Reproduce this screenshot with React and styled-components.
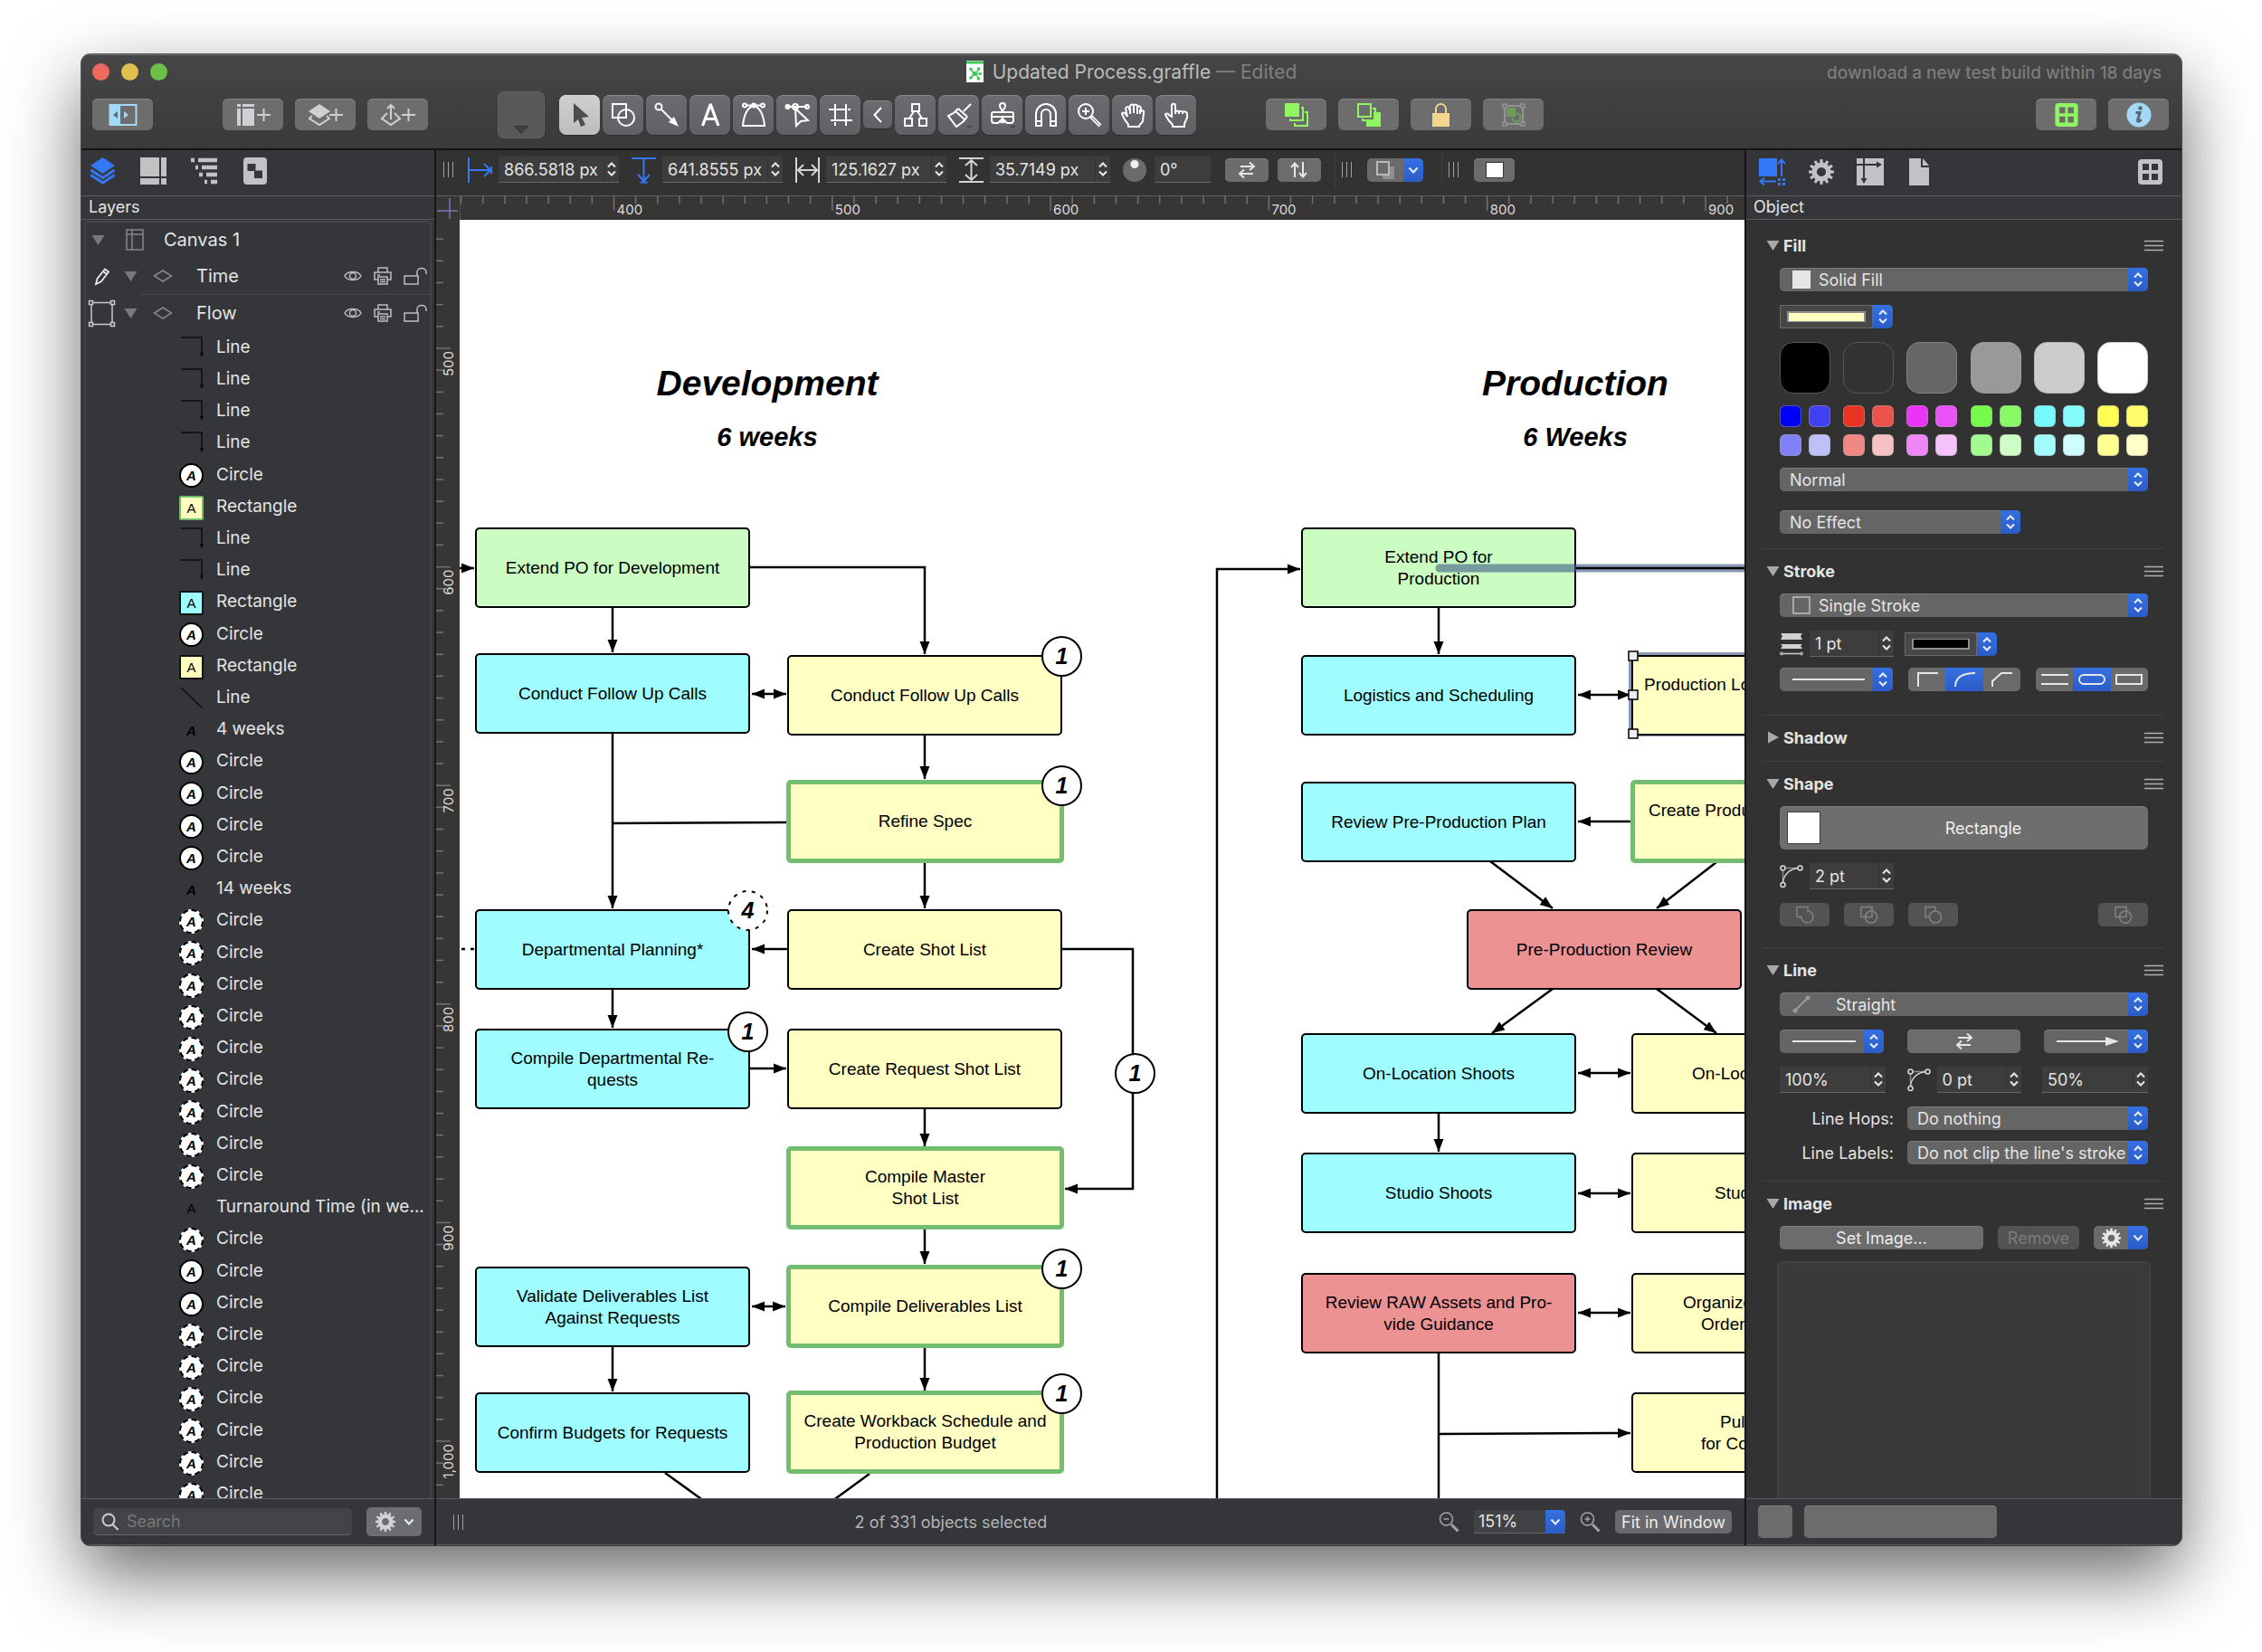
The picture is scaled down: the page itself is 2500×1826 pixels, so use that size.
import React from "react";
import styled, { createGlobalStyle, css } from "styled-components";

const UI = `Inter, "Liberation Sans", sans-serif`;
const HELV = `"Liberation Sans", Arial, sans-serif`;

const GlobalStyle = createGlobalStyle`
  * { box-sizing: border-box; }
  body { margin: 0; background: #fff; }
  button, input, select { font: inherit; color: inherit; margin: 0; }
  button { padding: 0; border: 0; background: none; cursor: default; }
  svg { display: block; flex: none; }
`;

/* ---------- window frame ---------- */

const Desktop = styled.div`
  height: 100vh;
  padding: 60px 89px 118px 90px;
  overflow: hidden;
  font-family: ${UI};
  color: #e4e4e4;
`;

const Window = styled.div`
  height: 100%;
  display: flex;
  flex-direction: column;
  border-radius: 10px;
  background: #323232;
  box-shadow: 0 0 0 1px rgba(0, 0, 0, 0.6), 0 32px 80px rgba(0, 0, 0, 0.6);
  overflow: hidden;
`;

const Header = styled.header`
  height: 106px;
  flex: none;
  border-bottom: 2px solid #141414;
  background: linear-gradient(#464646, #3a3a3a);
  box-shadow: inset 0 1px 0 #6c6c6c;
`;

const TitleBar = styled.div`
  height: 38px;
  display: grid;
  grid-template-columns: 1fr auto 1fr;
  align-items: center;
  padding: 0 12px;
`;

const Lights = styled.div`
  display: flex;
  gap: 13px;
`;

const Light = styled.button`
  width: 19px;
  height: 19px;
  border-radius: 50%;
  background: ${(p) => p.$color};
`;

const DocTitle = styled.div`
  display: flex;
  align-items: center;
  gap: 10px;
  font-size: 21px;
  color: #bcbcbc;
  span { color: #808080; }
`;

const Notice = styled.div`
  justify-self: end;
  padding: 3px 10px 0 0;
  font-size: 19px;
  font-weight: 500;
  color: #7c7c7c;
`;

const Toolbar = styled.div`
  height: 57px;
  display: flex;
  align-items: center;
  padding: 0 14px 0 12px;
`;

const ToolGroup = styled.div`
  display: flex;
  align-items: center;
  gap: ${(p) => p.$gap || 13}px;
  margin-left: ${(p) => (p.$push ? "auto" : `${p.$before || 0}px`)};
`;

const ToolbarButton = styled.button`
  width: 67px;
  height: 35px;
  display: grid;
  place-items: center;
  border-radius: 6px;
  background: #6d6d6d;
  box-shadow: inset 0 1px 0 #828282;
`;

const ToolButton = styled.button`
  width: ${(p) => (p.$small ? 32 : 45)}px;
  height: ${(p) => (p.$small ? 31 : 44)}px;
  display: grid;
  place-items: center;
  border-radius: ${(p) => (p.$small ? 6 : 8)}px;
  background: ${(p) => (p.$active ? "linear-gradient(#cfcfd1, #bdbdbf)" : "linear-gradient(#6b6c6f, #606164)")};
  box-shadow: inset 0 1px 0 ${(p) => (p.$active ? "#dcdcdc" : "#85868a")}, 0 1px 1px rgba(0, 0, 0, 0.25);
`;

const StyleWell = styled.button`
  width: 52px;
  height: 52px;
  display: grid;
  place-items: end center;
  padding-bottom: 4px;
  border: 1px solid #626262;
  border-radius: 7px;
  background: #585858;
`;

const Columns = styled.div`
  flex: 1;
  min-height: 0;
  display: grid;
  grid-template-columns: 392px minmax(0, 1fr) 483px;
`;

const Column = styled.section`
  min-width: 0;
  min-height: 0;
  display: flex;
  flex-direction: column;
`;

const LeftColumn = styled(Column)`
  background: #35363a;
  border-right: 2px solid #161616;
`;

const RightColumn = styled(Column)`
  background: #35363a;
  border-left: 2px solid #161616;
`;

const TabStrip = styled.nav`
  height: 51px;
  flex: none;
  display: flex;
  align-items: center;
  gap: ${(p) => p.$gap}px;
  padding: 0 20px ${(p) => p.$lift}px ${(p) => p.$left}px;
  border-bottom: 1px solid #5a5b5e;
`;

const Tab = styled.button`
  display: grid;
  place-items: center;
  margin-left: ${(p) => (p.$end ? "auto" : 0)};
`;

const PaneTitle = styled.h2`
  height: 26px;
  flex: none;
  margin: 0;
  padding-left: 8px;
  border-bottom: 1px solid #5a5b5e;
  font-size: 18px;
  font-weight: 400;
  line-height: 24px;
`;

const FooterBar = styled.footer`
  height: 52px;
  flex: none;
  display: flex;
  align-items: center;
  gap: ${(p) => p.$gap || 16}px;
  padding: ${(p) => p.$pad};
  border-top: 1px solid #5a5b5e;
  border-bottom: 1px solid #5a5b5e;
  background: #35363a;
`;

/* ---------- layer list ---------- */

const Layers = styled.div`
  flex: 1;
  min-height: 0;
  margin: 1px 3px 0;
  border: 2px solid #434446;
  border-bottom: 0;
  border-radius: 5px 5px 0 0;
  overflow: hidden;
  font-size: 19px;
`;

const CanvasRow = styled.div`
  height: 38px;
  display: flex;
  align-items: center;
  padding-left: 6px;
  font-size: 20px;
`;

const LayerRow = styled.div`
  height: ${(p) => (p.$last ? 40 : 42)}px;
  display: grid;
  grid-template-columns: 40px 32px 36px 1fr auto;
  align-items: center;
  padding: 0 3px 0 2px;
  font-size: 20px;
  background: ${(p) => (p.$last ? "none" : "linear-gradient(#47484b, #47484b) 59px 100% / 100% 1px no-repeat")};
`;

const LayerName = styled.span`
  padding-left: 12px;
`;

const RowIcons = styled.span`
  display: flex;
  align-items: center;
  gap: 13px;
`;

const Items = styled.ul`
  display: grid;
  grid-auto-rows: 35px 35px 35px 35px 36px;
  margin: 0;
  padding: 0 2px 0 103px;
  list-style: none;
`;

const Item = styled.li`
  display: grid;
  grid-template-columns: 27px 1fr;
  gap: 14px;
  align-items: center;
  white-space: nowrap;
`;

const Thumb = styled.span`
  width: 27px;
  height: 27px;
  margin-top: 3px;
  display: grid;
  place-items: center;
  font: 15px/1 ${HELV};
  color: #000;
  border-radius: 2px;
  ${(p) => p.$fill && css`
    background: ${p.$fill};
    border: 2px solid ${p.$edge || "#111"};
  `}
  ${(p) => p.$round && css`
    border-radius: 50%;
    background: #fff;
    border: 2px ${p.$dashed ? "dashed" : "solid"} #000;
  `}
  ${(p) => p.$bold && css`
    font-weight: 700;
    font-style: italic;
  `}
`;

const Search = styled.label`
  flex: 1;
  min-width: 0;
  height: 30px;
  display: flex;
  align-items: center;
  gap: 9px;
  padding-left: 9px;
  border-radius: 5px;
  border-bottom: 1px solid #626366;
  background: #434448;
  font-size: 18px;
  input {
    min-width: 0;
    flex: 1;
    padding: 0;
    border: 0;
    outline: 0;
    background: none;
  }
  input::placeholder { color: #77787b; opacity: 1; }
`;

/* ---------- shared controls ---------- */

const MenuButton = styled.button`
  width: 61px;
  height: 32px;
  flex: none;
  display: flex;
  align-items: center;
  justify-content: center;
  gap: 8px;
  border-radius: 5px;
  background: #6c6d70;
`;

const PushButton = styled.button`
  width: ${(p) => (p.$w ? `${p.$w}px` : "auto")};
  height: ${(p) => p.$h || 26}px;
  flex: ${(p) => (p.$grow ? 1 : "none")};
  display: grid;
  place-items: center;
  border-radius: 5px;
  background: ${(p) => (p.disabled ? "#535353" : "#6c6c6c")};
  box-shadow: ${(p) => (p.disabled ? "none" : "inset 0 1px 0 #7e7e7e")};
  color: ${(p) => (p.disabled ? "#7b7b7b" : "#ececec")};
`;

const FooterButton = styled(PushButton)`
  background: #68696c;
  box-shadow: none;
  font-size: 18px;
`;

const SplitButton = styled.button`
  height: 26px;
  display: flex;
  border-radius: 5px;
  overflow: hidden;
  background: #6a6a6a;
  > span {
    width: ${(p) => p.$w}px;
    display: grid;
    place-items: center;
  }
`;

const Cap = styled.i`
  grid-area: 1 / 1;
  justify-self: end;
  width: 22px;
  height: 26px;
  flex: none;
  display: grid;
  place-items: center;
  pointer-events: none;
  border-radius: 0 5px 5px 0;
  background: linear-gradient(#3570e2, #2a5cc8);
`;

const Popup = styled.div`
  width: ${(p) => (p.$w ? `${p.$w}px` : "auto")};
  flex: ${(p) => (p.$w ? "none" : 1)};
  height: 26px;
  display: grid;
  grid-template-columns: minmax(0, 1fr);
  align-items: center;
  select {
    grid-area: 1 / 1;
    width: 100%;
    height: 26px;
    padding: 0 22px 0 ${(p) => p.$inset || 11}px;
    appearance: none;
    border: 0;
    border-radius: 5px;
    outline: 0;
    background: #656565;
    box-shadow: inset 0 1px 0 #7a7a7a;
    color: #e6e6e6;
  }
  > svg {
    grid-area: 1 / 1;
    margin-left: 14px;
    pointer-events: none;
  }
`;

const ZoomPopup = styled.div`
  width: 101px;
  height: 26px;
  display: grid;
  font-size: 18px;
  select {
    grid-area: 1 / 1;
    padding: 0 0 0 5px;
    appearance: none;
    border: 0;
    border-bottom: 1px solid #6a6a6c;
    outline: 0;
    background: #414246;
  }
`;

const NumberBox = styled.span`
  width: ${(p) => p.$w}px;
  height: 29px;
  flex: none;
  display: flex;
  border-bottom: 1px solid #666;
  background: #3d3d3d;
  input {
    flex: 1;
    min-width: 0;
    padding: 0 0 0 6px;
    border: 0;
    outline: 0;
    background: none;
  }
`;

const Stepper = styled.button`
  width: 17px;
  flex: none;
  display: grid;
  place-items: center;
  border-left: 1px solid #333;
`;

const GripBars = styled.i`
  width: 11px;
  height: 17px;
  flex: none;
  border: solid #a0a0a0;
  border-width: 0 1px;
  background: linear-gradient(#a0a0a0, #a0a0a0) 50% 0 / 1px 100% no-repeat;
`;

const Divider = styled.i`
  width: 1px;
  height: 40px;
  flex: none;
  background: #404040;
`;

/* ---------- centre column ---------- */

const GeometryBar = styled.div`
  height: 51px;
  flex: none;
  display: flex;
  align-items: center;
  padding: 0 0 7px 8px;
  border-bottom: 1px solid #5f5f5f;
  background: #323232;
  font-size: 18px;
  overflow: hidden;
`;

const Measure = styled.label`
  display: flex;
  align-items: center;
  gap: 7px;
  margin-right: 14px;
`;

const Spaced = styled.span`
  display: flex;
  flex: none;
  margin-left: ${(p) => p.$before}px;
`;

const Dial = styled.button`
  width: 26px;
  height: 26px;
  flex: none;
  border-radius: 50%;
  background: radial-gradient(circle at 50% 25%, #eee 0 4px, #6b6b6b 5px);
`;

const FillWell = styled.i`
  width: 20px;
  height: 18px;
  background: #fff;
  border: 1px solid #333;
`;

const Workspace = styled.div`
  flex: 1;
  min-height: 0;
  display: grid;
  grid-template: 26px minmax(0, 1fr) / 26px minmax(0, 1fr);
  background: #383535;
`;

const RulerClip = styled.div`
  min-width: 0;
  min-height: 0;
  overflow: hidden;
  border: solid #57534f;
  border-width: ${(p) => (p.$vertical ? "0" : "0 0 0 1px")};
  text { font: 15px ${UI}; fill: #dcdcdc; }
`;

const Canvas = styled.main`
  position: relative;
  overflow: hidden;
  background: #fff;
`;

const EdgeLayer = styled.svg`
  position: absolute;
  inset: 0;
  overflow: visible;
  pointer-events: none;
`;

const Node = styled.div`
  position: absolute;
  left: ${(p) => p.$x}px;
  top: ${(p) => p.$y}px;
  width: ${(p) => (p.$key ? 307 : 304)}px;
  height: ${(p) => (p.$key ? 92 : 89)}px;
  margin: ${(p) => (p.$key ? "-2px -1px" : "0")};
  display: flex;
  flex-direction: column;
  justify-content: center;
  border: ${(p) => (p.$key ? "5px solid #73bd70" : "2px solid #000")};
  border-radius: 5px;
  background: ${(p) => p.$fill};
  color: #000;
  font: 19px/24px ${HELV};
  text-align: center;
  white-space: nowrap;
  ${(p) => p.$selected && css`
    border-radius: 0;
    box-shadow: -3px -3px 0 #8b9bb5, 0 1px 0 #8b9bb5;
  `}
`;

const Line = styled.span`
  display: block;
  min-height: 24px;
  ${(p) => p.$lead && css`
    text-align: left;
    padding-left: ${p.$lead}px;
  `}
`;

const Badge = styled.div`
  position: absolute;
  left: ${(p) => p.$x - 22}px;
  top: ${(p) => p.$y - 22}px;
  width: 45px;
  height: 45px;
  display: grid;
  place-items: center;
  color: #000;
  font: italic 700 25px/1 ${HELV};
  svg, span { grid-area: 1 / 1; }
`;

const PhaseTitle = styled.h1`
  position: absolute;
  left: ${(p) => p.$x - 200}px;
  top: ${(p) => p.$y}px;
  width: 400px;
  margin: 0;
  color: #000;
  text-align: center;
  font: italic 700 39px/44px ${HELV};
  small {
    display: block;
    padding-top: 20px;
    font-size: 29px;
    line-height: 34px;
  }
`;

const Status = styled.span`
  flex: 1;
  text-align: center;
  font-size: 18px;
  color: #b3b3b5;
`;

/* ---------- inspector ---------- */

const Inspector = styled.div`
  flex: 1;
  min-height: 0;
  display: flex;
  flex-direction: column;
  padding: 4px 19px 0;
  background: #323232;
  font-size: 18px;
  overflow: hidden;
`;

const Section = styled.section`
  flex: none;
  padding: 12px 0 ${(p) => p.$foot}px;
  border-bottom: 1px solid #414141;
  ${(p) => p.$last && css`
    flex: 1;
    min-height: 0;
    display: flex;
    flex-direction: column;
    border: 0;
  `}
`;

const SectionHead = styled.div`
  height: 24px;
  flex: none;
  display: flex;
  align-items: center;
  justify-content: space-between;
  padding: 0 1px 0 3px;
  h3 { margin: 0; font-size: 18px; font-weight: 700; }
  h3 button { display: flex; align-items: center; gap: 4px; }
`;

const Body = styled.div`
  display: flex;
  flex-direction: column;
  gap: ${(p) => p.$gap || 15}px;
  padding: ${(p) => (p.$plain ? `0 0 ${p.$under || 0}px` : "13px 18px 0")};
  ${(p) => p.$fill && css`flex: 1; min-height: 0;`}
`;

const Row = styled.div`
  display: flex;
  align-items: center;
  justify-content: ${(p) => (p.$spread ? "space-between" : "flex-start")};
  gap: ${(p) => p.$gap || 0}px;
`;

const LabeledRow = styled.div`
  display: grid;
  grid-template-columns: 126px 1fr;
  align-items: center;
  gap: 15px;
  label { text-align: right; }
`;

const Well = styled.button`
  width: ${(p) => p.$w}px;
  height: 26px;
  display: flex;
  i:first-child {
    flex: 1;
    height: 26px;
    border: 1px solid #6a6a6a;
    background: linear-gradient(${(p) => p.$color}, ${(p) => p.$color}) center / calc(100% - 18px) 9px no-repeat,
      linear-gradient(#8f8f8f, #8f8f8f) center / calc(100% - 14px) 12px no-repeat, #474747;
  }
`;

const Palette = styled.div`
  display: grid;
  grid-template-columns: repeat(6, 56px);
  justify-content: space-between;
  row-gap: 13px;
`;

const Swatch = styled.button`
  height: ${(p) => (p.$big ? 57 : 24)}px;
  border: 1px solid ${(p) => p.$edge || "rgba(160, 160, 160, 0.5)"};
  border-radius: ${(p) => (p.$big ? 15 : 6)}px;
  background: ${(p) => p.$color};
`;

const SwatchGroup = styled.div`
  display: grid;
  grid-template-columns: 24px 24px;
  gap: 8px;
`;

const Segments = styled.div`
  width: 124px;
  height: 26px;
  display: grid;
  grid-template-columns: repeat(3, 1fr);
  border-radius: 5px;
  overflow: hidden;
  background: #6a6a6a;
`;

const Segment = styled.button`
  display: grid;
  place-items: center;
  background: ${(p) => (p.$on ? "linear-gradient(#3570e2, #2a5cc8)" : "none")};
`;

const ShapeButton = styled.button`
  height: 48px;
  display: grid;
  grid-template-columns: 37px 1fr;
  align-items: center;
  padding: 0 2px 0 8px;
  border-radius: 6px;
  background: #6e6e6e;
  box-shadow: inset 0 1px 0 #808080;
  color: #f0f0f0;
  i { height: 36px; background: #fff; border: 1px solid #3a3a3a; }
`;

const Spring = styled.span`
  flex: 1;
`;

const ImageDrop = styled.div`
  flex: 1;
  margin: 0 -3px;
  border: 2px solid #414141;
  border-bottom: 0;
  border-radius: 6px 6px 0 0;
  background: #3a3a3a;
`;

/* ---------- icons ---------- */

const Icon = ({ w = 28, h = w, c = "#e6e6e6", s = 2, children, box }) => (
  <svg width={w} height={h} viewBox={box || `0 0 ${w} ${h}`} fill="none" stroke={c} strokeWidth={s} aria-hidden="true">
    {children}
  </svg>
);

const UpDown = ({ c = "#e8e8e8" }) => (
  <Icon w={12} h={18} c={c}>
    <path d="M2 6.500 6 2.500l4 4M2 11.500l4 4 4-4" />
  </Icon>
);
const ChevronDown = ({ c = "#e8eefc" }) => (
  <Icon w={12} h={10} c={c}><path d="M1.500 2.500 6 7.500 10.500 2.500" /></Icon>
);
const Triangle = ({ c = "#a8a8a8", right }) => (
  <Icon w={15} h={14}>
    <path d={right ? "M2 0.500v13l12-6.500z" : "M0.500 2h14l-7 11z"} fill={c} stroke="none" />
  </Icon>
);
const gearPath = (() => {
  const pts = [];
  const n = 12;
  for (let i = 0; i < n; i++) {
    [[-0.17, 10.4], [-0.1, 14], [0.1, 14], [0.17, 10.4]].forEach(([d, r]) => {
      const a = (i / n) * Math.PI * 2 + d;
      pts.push(`${(15 + r * Math.sin(a)).toFixed(1)} ${(15 - r * Math.cos(a)).toFixed(1)}`);
    });
  }
  return `M${pts.join("L")}ZM15 10a5 5 0 1 0 .01 0Z`;
})();
const Gear = ({ w = 30, c = "#c2c2c4" }) => (
  <Icon w={w} h={w} box="0 0 30 30"><path d={gearPath} fill={c} stroke="none" fillRule="evenodd" /></Icon>
);
const Swap = () => (
  <Icon w={22} h={20}><path d="M4 6h15M14 1.500 19 6l-5 4M18 14H3M8 9.500 3 14l5 4.500" /></Icon>
);
const Hamburger = () => (
  <Icon w={21} h={13} c="#b0b0b0" s={1.5}><path d="M0 1.500h21M0 6.500h21M0 11.500h21" /></Icon>
);
const GridIcon = ({ c, hole, w = 29, h = 30 }) => (
  <Icon w={w} h={h} box="0 0 29 30">
    <rect x="1" y="1" width="27" height="28" rx="4" fill={c} stroke="none" />
    <path d="M6 6h7v7H6zM16 6h7v7h-7zM6 17h7v7H6zM16 17h7v7h-7z" fill={hole} stroke="none" />
  </Icon>
);
const Curve = () => (
  <Icon w={26} h={26} c="#d8d8d8" s={1.5}>
    <path d="M3.500 6v13M6 3.500h14" stroke="#8a8a8a" />
    <path d="M3.500 20C4 10 12 4 21 3.500" />
    <circle cx="3.500" cy="3.500" r="2.500" fill="#323232" /><circle cx="22.500" cy="3.500" r="2.500" fill="#323232" />
    <circle cx="3.500" cy="22" r="2.500" fill="#323232" />
  </Icon>
);
const Magnifier = ({ plus }) => (
  <Icon w={23} h={24} c="#a4a4a6" s={1.5}>
    <circle cx="8.500" cy="9" r="7" /><path d="M5.500 9h6" />{plus && <path d="M8.500 6v6" />}
    <path d="m14 15 7.500 7.500" strokeWidth="3" />
  </Icon>
);
const Eye = () => (
  <Icon w={20} h={14} c="#bdbdbf" s={1.5}>
    <path d="M1 7C4 1 16 1 19 7 16 13 4 13 1 7Z" /><circle cx="10" cy="7" r="3.500" />
  </Icon>
);
const Printer = () => (
  <Icon w={20} h={20} c="#bdbdbf" s={1.5}>
    <path d="M5 6V1h10v5M5 14H1V6h18v8h-4M5 11h10v8H5zM4 9h3M7 14h6M7 16.500h6" />
  </Icon>
);
const OpenLock = () => (
  <Icon w={26} h={20} c="#bdbdbf" s={1.5}>
    <path d="M1 10h15v9H1zM15 10V6c0-6 10-6 10 0v2" />
  </Icon>
);
const Diamond = () => (
  <Icon w={22} h={14} c="#85868a" s={1.5}><path d="m1.500 7 9.500-6 9.500 6-9.500 6z" /></Icon>
);
const Boolean = ({ d }) => (
  <Icon w={22} h={20} c="#828282" s={1.5}><path d={d} /></Icon>
);
const Boxed = "M2 1.500h12v11H2z";
const Ring = "M13 6a6.500 6.500 0 1 0 .01 0Z";

const ToolIcon = ({ children, s }) => <Icon w={28} h={28} c="#fff" s={s}>{children}</Icon>;
const MenuHint = () => <path d="M22 26h7l-3.500 4z" fill="#48494b" stroke="none" />;

const tools = [
  ["Shape", <ToolIcon key="i"><path d="M2 2h15v15H2z" /><circle cx="17" cy="17" r="9" /></ToolIcon>],
  ["Line", <ToolIcon key="i"><circle cx="5" cy="5" r="3.500" /><path d="m8 8 12 12" /><path d="m27 27-11-5 6-6z" fill="#fff" stroke="none" /></ToolIcon>],
  ["Text", <ToolIcon key="i" s={3.2}><path d="M5.500 26 14 3h.500L23 26M8.500 18.500h11.500" /></ToolIcon>],
  ["Pen", <ToolIcon key="i"><path d="M5 3.500h18M14 3.500C7 6 3 15 2 26h24C25 15 21 6 14 3.500" /><circle cx="4" cy="3.500" r="2" /><circle cx="24" cy="3.500" r="2" /><circle cx="14" cy="3.500" r="3" fill="#fff" stroke="none" /></ToolIcon>],
  ["Point Editor", <ToolIcon key="i"><path d="M3 5h22M12 7l1 19 5-5 8-1z" /><circle cx="3.500" cy="5" r="2" /><circle cx="25" cy="5" r="2" /><circle cx="12" cy="5" r="3" /></ToolIcon>],
  ["Artboard", <ToolIcon key="i"><path d="M1 8h19M3 20h24M8 2v18M20 2v24" /><path d="M8 22v4M22 8h3" /></ToolIcon>],
];
const tools2 = [
  ["Diagram", <ToolIcon key="i"><path d="M10 2h8v8h-8zM2 18h8v8H2zM18 18h8v8h-8zM12 10l-5 8M16 10l5 8" /></ToolIcon>],
  ["Style Brush", <ToolIcon key="i"><path d="m27 2-8 8M13 7l10 9M13 7l-5 5-6 3 9 12 8-6 4-5M10 10l10 9" /><MenuHint /></ToolIcon>],
  ["Rubber Stamp", <ToolIcon key="i"><path d="M14 11c0-3-3-4-3-7a3 3 0 0 1 6 0c0 3-3 4-3 7ZM4 11h20a2 2 0 0 1 2 2v7a3 3 0 0 1-3 3h-4l-5-5-5 5H5a3 3 0 0 1-3-3v-7a2 2 0 0 1 2-2ZM2 16h24M12 23l2-2 2 2" /><MenuHint /></ToolIcon>],
  ["Magnet", <ToolIcon key="i"><path d="M3 26V13a11 11 0 0 1 22 0v13h-6V13a5 5 0 0 0-10 0v13zM3 21h6M19 21h6" /></ToolIcon>],
  ["Zoom", <ToolIcon key="i"><circle cx="10" cy="10" r="8" /><path d="M10 6v8M6 10h8" /><path d="m16 16 10 10" strokeWidth="4" /><path d="m17 17 8.500 8.500" stroke="#66676a" strokeWidth="1" /></ToolIcon>],
  ["Hand", <ToolIcon key="i"><path d="M9 27v-2c0-2-4-4-5-8l-2-4c0-2 3-2 4 0l2 3-2-9c0-2 3-3 4 0l1-3c1-2 4-2 4 0 1-2 4-2 4 1 1-1 4-1 4 2v3c1-1 4-1 3 2l-1 9-4 5v1zM11 6v7M15 4v8M19 5v8M22 8v5" /></ToolIcon>],
  ["Browse", <ToolIcon key="i"><path d="M10 27v-2c-1-2-4-4-5-6l-3-5c0-2 3-2 4 0l3 2V4c0-3 4-3 4 0v7c1-2 4-2 4 0 1-2 4-1 4 0 1-1 5-1 5 2v4l-3 7v3zM13 11v2M17 11v2M21 11v2" /></ToolIcon>],
];

const ToolItems = ({ list }) =>
  list.map(([name, icon]) => <ToolButton key={name} aria-label={name}>{icon}</ToolButton>);

function AppHeader() {
  return (
    <Header>
      <TitleBar>
        <Lights>
          <Light $color="#ee6a5e" aria-label="Close" />
          <Light $color="#dfc04c" aria-label="Minimize" />
          <Light $color="#6cc04a" aria-label="Zoom" />
        </Lights>
        <DocTitle>
          <Icon w={19} h={24} c="#3fc65a">
            <rect width="19" height="24" fill="#fff" stroke="none" />
            <path d="M0 2h19" strokeWidth="3" />
            <path d="M5 10l4 4.500 5-4.500M5 19l4-4.500 5 4.500M9 14.500h6" strokeWidth="1.500" />
            <g fill="#3fc65a" stroke="none"><circle cx="5" cy="9.500" r="1.800" /><circle cx="13.500" cy="9" r="1.800" /><circle cx="5" cy="19" r="1.800" /><circle cx="13.500" cy="20" r="1.800" /><circle cx="15.500" cy="14.500" r="1.500" /><circle cx="9" cy="14.500" r="2.500" /></g>
          </Icon>
          <div>Updated Process.graffle <span>— Edited</span></div>
        </DocTitle>
        <Notice>download a new test build within 18 days</Notice>
      </TitleBar>
      <Toolbar>
        <ToolbarButton aria-label="Sidebar">
          <Icon w={32} h={26} c="#a3d8f6">
            <path d="M1.500 2h29v22h-29z" /><path d="M1 1h12v24H1z" fill="#a3d8f6" stroke="none" />
            <path d="M10 9v8l-5-4z" fill="#5d6d78" stroke="none" /><path d="M17 9v8l5-4z" fill="#a3d8f6" stroke="none" />
          </Icon>
        </ToolbarButton>
        <ToolGroup $before={77}>
          <ToolbarButton aria-label="New Canvas">
            <Icon w={40} h={26} c="#cfcfd4">
              <path d="M2 1h4v3H2zM8 1h13v3H8zM2 6h4v19H2zM8 6h13v19H8z" fill="#cfcfd4" stroke="none" /><path d="M24 13h15M31.500 6v14" />
            </Icon>
          </ToolbarButton>
          <ToolbarButton aria-label="New Layer">
            <Icon w={40} h={26} c="#cfcfd4">
              <path d="m13 1 12 8-12 8L1 9z" fill="#cfcfd4" stroke="none" /><path d="m5 14-3 3 11 7 11-7-3-3M24 13h15M31.500 6v14" />
            </Icon>
          </ToolbarButton>
          <ToolbarButton aria-label="New Action">
            <Icon w={40} h={26} c="#cfcfd4">
              <path d="M12 18V2M8 6l4-4 4 4M8 11l-6 6 10 7 10-7-6-6M24 13h15M31.500 6v14" />
            </Icon>
          </ToolbarButton>
        </ToolGroup>
        <ToolGroup $before={77}>
          <StyleWell aria-label="Style">
            <Icon w={16} h={9} c="#2c2c2c" s={1}><path d="M1 .500h14L8 8z" fill="#444" /></Icon>
          </StyleWell>
        </ToolGroup>
        <ToolGroup $before={16} $gap={3}>
          <ToolButton $active aria-label="Selection">
            <Icon w={28} h={28}><path d="M7 1v22l5-4 3 8 5-2-4-8 8-1z" fill="#4c4c4e" stroke="none" /></Icon>
          </ToolButton>
          <ToolItems list={tools} />
          <ToolButton $small aria-label="More Tools">
            <Icon w={12} h={20} c="#fff"><path d="M10 2 2.500 10l7.500 8" /></Icon>
          </ToolButton>
          <ToolItems list={tools2} />
        </ToolGroup>
        <ToolGroup $before={77}>
          <ToolbarButton aria-label="Bring to Front">
            <Icon w={28} h={28} c="#91f562">
              <path d="M1 1h16v15H1z" fill="#91f562" stroke="none" /><path d="M19 6h2v14H7v-2M23 11h3v15H12v-3" />
            </Icon>
          </ToolbarButton>
          <ToolbarButton aria-label="Send to Back">
            <Icon w={28} h={28} c="#91f562">
              <path d="M11 21h8V11h8v16H11z" fill="#91f562" stroke="none" /><path d="M2 2h14v14H2zM18 7h3v13H7v-2" />
            </Icon>
          </ToolbarButton>
          <ToolbarButton aria-label="Lock">
            <Icon w={22} h={28} c="#f3d58c">
              <path d="M5 13V8c0-8 11-8 11 0v5" /><path d="M1 12h19v15H1z" fill="#f3d58c" stroke="none" />
            </Icon>
          </ToolbarButton>
          <ToolbarButton aria-label="Group">
            <Icon w={28} h={28} c="#949494">
              <path d="M4 4h20v20H4z" /><path d="M6 6h10v10H6z" fill="#6f9b5b" stroke="none" /><circle cx="17" cy="17" r="4.500" stroke="#6f9b5b" />
              <path d="M2 2h4v4H2zM22 2h4v4h-4zM2 22h4v4H2zM22 22h4v4h-4z" fill="#6e6e6e" strokeWidth="1.500" />
            </Icon>
          </ToolbarButton>
        </ToolGroup>
        <ToolGroup $push>
          <ToolbarButton aria-label="Stencils"><GridIcon w={28} h={28} c="#91f562" hole="#6b6d6a" /></ToolbarButton>
          <ToolbarButton aria-label="Inspect">
            <Icon w={28} h={28} c="#5c6870" s={3}>
              <circle cx="14" cy="14" r="13.500" fill="#a3d8f6" stroke="none" />
              <circle cx="15.500" cy="6.500" r="2.300" fill="#5c6870" stroke="none" /><path d="M10.500 11.500h4.500l-2.500 8.500c0 2 2 1.500 4-1" />
            </Icon>
          </ToolbarButton>
        </ToolGroup>
      </Toolbar>
    </Header>
  );
}

/* ---------- left column ---------- */

const line = { type: "elbow", name: "Line" };
const circle = { type: "circle", name: "Circle" };
const dashed = { type: "dashed", name: "Circle" };
const items = [
  line, line, line, line, circle,
  { type: "rect", name: "Rectangle", fill: "#ffffc0", edge: "#73bd70" },
  line, line,
  { type: "rect", name: "Rectangle", fill: "#9ffcff" },
  circle,
  { type: "rect", name: "Rectangle", fill: "#ffffc0" },
  { type: "diagonal", name: "Line" },
  { type: "boldText", name: "4 weeks" },
  circle, circle, circle, circle,
  { type: "boldText", name: "14 weeks" },
  ...Array(9).fill(dashed),
  { type: "text", name: "Turnaround Time (in we..." },
  dashed, circle, circle,
  ...Array(6).fill(dashed),
];

function ItemThumb({ item }) {
  if (item.type === "elbow") {
    return <Icon w={27} h={26} c="#0c0c0c" s={1.5}><path d="M2 2h23v20" /><path d="M22.500 19h5L25 24z" fill="#0c0c0c" stroke="none" /></Icon>;
  }
  if (item.type === "diagonal") return <Icon w={27} h={26} c="#0c0c0c" s={1.5}><path d="m2 2 23 22" /></Icon>;
  if (item.type === "rect") return <Thumb $fill={item.fill} $edge={item.edge}>A</Thumb>;
  if (item.type === "text") return <Thumb>A</Thumb>;
  if (item.type === "boldText") return <Thumb $bold>A</Thumb>;
  return <Thumb $round $bold $dashed={item.type === "dashed"}>A</Thumb>;
}

function LeftPane() {
  return (
    <LeftColumn>
      <TabStrip $gap={27} $left={9} $lift={4}>
        <Tab aria-label="Layers">
          <Icon w={29} h={30} c="#3478f6" s={3}>
            <path d="M14.500 0 28 9l-13.500 9L1 9z" fill="#3478f6" stroke="none" /><path d="m1.500 14 13 8.500 13-8.500M1.500 19.500l13 8.500 13-8.500" />
          </Icon>
        </Tab>
        <Tab aria-label="Guides">
          <Icon w={29} h={30}><path d="M0 0h21v21H0zM23 0h6v21h-6zM0 23h21v7H0zM23 23h6v7h-6z" fill="#c2c2c4" stroke="none" /></Icon>
        </Tab>
        <Tab aria-label="Outline">
          <Icon w={29} h={30} c="#c2c2c4" s={4.5}>
            <path d="M0 3h4M8 3h21M5 11h3M12 11h17M9 19h4M17 19h12M15 27h3M22 27h7" />
          </Icon>
        </Tab>
        <Tab aria-label="Selection">
          <Icon w={29} h={30}>
            <rect x="2" width="26" height="30" rx="4" fill="#c2c2c4" stroke="none" />
            <path d="M6.500 7h9v7.500h7.500V23h-9v-8H6.500z" fill="#35363a" stroke="none" />
          </Icon>
        </Tab>
      </TabStrip>
      <PaneTitle>Layers</PaneTitle>
      <Layers>
        <CanvasRow>
          <RowIcons>
            <button aria-label="Collapse Canvas 1"><Triangle c="#77787b" /></button>
          </RowIcons>
          <Spaced $before={23}>
            <Icon w={20} h={24} c="#85868a" s={1.5}><path d="M1 1h18v22H1zM7 1v22M1 6h18" /></Icon>
          </Spaced>
          <Spaced $before={22}>Canvas 1</Spaced>
        </CanvasRow>
        {["Time", "Flow"].map((name, i) => (
          <LayerRow key={name} $last={i === 1}>
            {i === 0 ? (
              <Icon w={30} h={22} c="#e8e8e8" s={1.8}>
                <path d="m9 20 1.500-6L19 3.500l4 3L15 17zM17 6l4 3" />
              </Icon>
            ) : (
              <Icon w={31} h={31} c="#c9c9cb" s={1.5}>
                <path d="M4 3.500h23v24H4z" /><path d="M1.500 1.500h4v4h-4zM25.500 1.500h4v4h-4zM1.500 25.500h4v4h-4zM25.500 25.500h4v4h-4z" fill="#35363a" />
              </Icon>
            )}
            <button aria-label={`Collapse ${name}`}><Triangle c="#77787b" /></button>
            <Diamond />
            <LayerName>{name}</LayerName>
            <RowIcons><Eye /><Printer /><OpenLock /></RowIcons>
          </LayerRow>
        ))}
        <Items>
          {items.map((item, i) => (
            <Item key={i}><ItemThumb item={item} />{item.name}</Item>
          ))}
        </Items>
      </Layers>
      <FooterBar $pad="0 14px 0 13px">
        <Search>
          <Icon w={19} h={20} c="#cfcfd1"><circle cx="8" cy="8" r="6.500" /><path d="m12.500 13 6 6" /></Icon>
          <input aria-label="Search" placeholder="Search" />
        </Search>
        <MenuButton aria-label="Layer actions"><Gear w={24} c="#d2d2d4" /><ChevronDown /></MenuButton>
      </FooterBar>
    </LeftColumn>
  );
}

/* ---------- centre column ---------- */

const ORIGIN = { x: 508, y: 243 };
const GREEN = "#cbfdc3";
const CYAN = "#9ffcff";
const YELLOW = "#ffffc4";
const RED = "#ed9293";

const nodes = [
  [525, 583, GREEN, ["Extend PO for Development"]],
  [525, 722, CYAN, ["Conduct Follow Up Calls"]],
  [870, 724, YELLOW, ["Conduct Follow Up Calls"]],
  [870, 864, YELLOW, ["Refine Spec"], "key"],
  [525, 1005, CYAN, ["Departmental Planning*"]],
  [870, 1005, YELLOW, ["Create Shot List"]],
  [525, 1137, CYAN, ["Compile Departmental Re-", "quests"]],
  [870, 1137, YELLOW, ["Create Request Shot List"]],
  [870, 1269, YELLOW, ["Compile Master", "Shot List"], "key"],
  [525, 1400, CYAN, ["Validate Deliverables List", "Against Requests"]],
  [870, 1400, YELLOW, ["Compile Deliverables List"], "key"],
  [525, 1539, CYAN, ["Confirm Budgets for Requests"]],
  [870, 1539, YELLOW, ["Create Workback Schedule and", "Production Budget"], "key"],
  [1438, 583, GREEN, ["Extend PO for", "Production"]],
  [1438, 724, CYAN, ["Logistics and Scheduling"]],
  [1438, 864, CYAN, ["Review Pre-Production Plan"]],
  [1621, 1005, RED, ["Pre-Production Review"]],
  [1438, 1142, CYAN, ["On-Location Shoots"]],
  [1438, 1274, CYAN, ["Studio Shoots"]],
  [1438, 1407, RED, ["Review RAW Assets and Pro-", "vide Guidance"]],
  [1803, 724, YELLOW, [["Production Logistics", 12], ""], "selected"],
  [1803, 864, YELLOW, [["Create Production", 15], ""], "key"],
  [1803, 1142, YELLOW, [["On-Location", 65]]],
  [1803, 1274, YELLOW, [["Studio", 90]]],
  [1803, 1407, YELLOW, [["Organize", 55], ["Order", 75]]],
  [1803, 1539, YELLOW, [["Pull", 96], ["for Color", 75]]],
];

const badges = [
  [1173, 725, "1"], [1173, 868, "1"], [826, 1006, "4", true], [826, 1140, "1"],
  [1254, 1186, "1"], [1173, 1402, "1"], [1173, 1540, "1"],
];

/* path, arrow at the end, arrow at the start */
const edges = [
  ["M500 628H524", 1], ["M829 627H1022V723", 1], ["M677 672V721", 1], ["M831 767H869", 1, 1],
  ["M677 811V1004", 1], ["M870 909L677 910"], ["M1022 812V861", 1], ["M1022 954V1004", 1],
  ["M870 1049H831", 1], ["M1174 1049H1252V1314H1177", 1], ["M677 1093V1136", 1],
  ["M829 1181H869", 1], ["M1022 1225V1267", 1], ["M1022 1358V1397", 1], ["M831 1444H868", 1, 1],
  ["M677 1488V1538", 1], ["M1022 1490V1537", 1], ["M735 1628L778 1659"], ["M961 1629L920 1659"],
  ["M1345 1800V629H1437", 1], ["M1590 672V723", 1], ["M1744 768H1802", 1, 1], ["M1803 908H1744", 1],
  ["M1647 952L1716 1004", 1], ["M1897 953L1831 1004", 1], ["M1716 1093L1649 1142", 1],
  ["M1831 1093L1897 1142", 1], ["M1744 1186H1802", 1, 1], ["M1590 1230V1273", 1],
  ["M1744 1319H1802", 1, 1], ["M1744 1451H1802", 1, 1], ["M1590 1495V1800"], ["M1590 1585L1802 1584", 1],
];

const inCanvas = `translate(${-ORIGIN.x} ${-ORIGIN.y})`;

function Diagram() {
  return (
    <Canvas>
      <PhaseTitle $x={848 - ORIGIN.x} $y={402 - ORIGIN.y}>Development<small>6 weeks</small></PhaseTitle>
      <PhaseTitle $x={1741 - ORIGIN.x} $y={402 - ORIGIN.y}>Production<small>6 Weeks</small></PhaseTitle>
      <EdgeLayer width="100%" height="100%" fill="none" stroke="#000" strokeWidth="2.500">
        <defs>
          <marker id="head" markerUnits="userSpaceOnUse" markerWidth="16" markerHeight="12" refX="14" refY="6" orient="auto-start-reverse">
            <path d="M0 0.500 14 6 0 11.500z" fill="#000" stroke="none" />
          </marker>
        </defs>
        <g transform={inCanvas}>
          {edges.map(([d, end, start]) => (
            <path key={d} d={d} markerEnd={end ? "url(#head)" : undefined} markerStart={start ? "url(#head)" : undefined} />
          ))}
          <path d="M510 1049h18" strokeDasharray="4 6" />
        </g>
      </EdgeLayer>
      {nodes.map(([x, y, fill, lines, kind]) => (
        <Node key={`${x}-${y}`} $x={x - ORIGIN.x} $y={y - ORIGIN.y} $fill={fill} $key={kind === "key"} $selected={kind === "selected"}>
          {lines.map((l, i) => (Array.isArray(l) ? <Line key={i} $lead={l[1]}>{l[0]}</Line> : <Line key={i}>{l}</Line>))}
        </Node>
      ))}
      {badges.map(([x, y, label, dash]) => (
        <Badge key={`${x}-${y}`} $x={x - ORIGIN.x} $y={y - ORIGIN.y}>
          <Icon w={45} h={45} c="#000"><circle cx="22.500" cy="22.500" r="21.500" fill="#fff" strokeDasharray={dash ? "4 6.500" : undefined} /></Icon>
          <span>{label}</span>
        </Badge>
      ))}
      <EdgeLayer width="100%" height="100%" fill="none">
        <g transform={inCanvas}>
          <path d="M1591 628H2400" stroke="#3e5884" strokeOpacity=".6" strokeWidth="9" strokeLinecap="round" />
          <path d="M1742 628H2400" stroke="#000" strokeWidth="2.500" />
          {[725, 768, 811].map((y) => (
            <rect key={y} x="1800" y={y - 5} width="10" height="10" fill="#ededf2" stroke="#000" strokeWidth="1.500" />
          ))}
        </g>
      </EdgeLayer>
    </Canvas>
  );
}

const steps = (from, to) => Array.from({ length: to - from + 1 }, (_, i) => i + from);

function HorizontalRuler() {
  return (
    <RulerClip>
      <svg width="100%" height="26">
        {steps(-7, 59).map((i) => {
          const x = 169.5 + i * 24.13;
          const major = i % 10 === 0;
          return (
            <g key={i}>
              <path d={`M${x} 0v${major ? 16 : 8}`} stroke="#76716f" strokeWidth="1.500" />
              {major && <text x={x + 3} y="20">{400 + i * 10}</text>}
            </g>
          );
        })}
      </svg>
    </RulerClip>
  );
}

function VerticalRuler() {
  return (
    <RulerClip $vertical>
      <svg width="26" height="100%">
        {steps(-5, 59).map((i) => {
          const y = 142 + i * 24.16;
          const major = i % 10 === 0;
          return (
            <g key={i}>
              <path d={`M0 ${y}h${major ? 16 : 8}`} stroke="#76716f" strokeWidth="1.500" />
              {major && <text transform={`translate(19 ${y + 3}) rotate(-90)`} textAnchor="end">{(500 + i * 10).toLocaleString("en-US")}</text>}
            </g>
          );
        })}
      </svg>
    </RulerClip>
  );
}

const NumberField = ({ w, label, value, plain }) => (
  <NumberBox $w={w}>
    <input aria-label={label} defaultValue={value} />
    {!plain && <Stepper aria-label={`Step ${label}`}><UpDown /></Stepper>}
  </NumberBox>
);

const measures = [
  ["X position", "866.5818 px", <Icon key="i" w={27} h={30} c="#3478f6"><path d="M1 1v28M1 15h24M18 8l7 7-7 7M26 11v8" /></Icon>],
  ["Y position", "641.8555 px", <Icon key="i" w={27} h={30} c="#3478f6"><path d="M0 2h27M13.500 2v25M7 20l6.500 7 6.500-7M9.500 28.500h8" /></Icon>],
  ["Width", "125.1627 px", <Icon key="i" w={27} h={30} c="#d5d5d5"><path d="M1 1v28M26 1v28M3 15h21M9 9l-6 6 6 6M18 9l6 6-6 6" /></Icon>],
  ["Height", "35.7149 px", <Icon key="i" w={27} h={30} c="#d5d5d5"><path d="M0 2h27M0 28h27M13.500 4v22M7 10l6.500-6 6.500 6M7 20l6.500 6 6.500-6" /></Icon>],
];

function CentrePane() {
  return (
    <Column>
      <GeometryBar>
        <GripBars />
        <Spaced $before={16}>
          {measures.map(([label, value, icon]) => (
            <Measure key={label}>{icon}<NumberField w={133} label={label} value={value} /></Measure>
          ))}
        </Spaced>
        <Dial aria-label="Rotation dial" />
        <Spaced $before={9}><NumberField w={62} label="Rotation" value="0°" plain /></Spaced>
        <Spaced $before={16}><PushButton $w={48} aria-label="Flip horizontally"><Swap /></PushButton></Spaced>
        <Spaced $before={10}>
          <PushButton $w={48} aria-label="Flip vertically">
            <Icon w={22} h={20}><path d="M6 18V3M2 7l4-4.500L10 7M15 1v16M11 13l4 4.500 4-4.500" /></Icon>
          </PushButton>
        </Spaced>
        <Spaced $before={15}><Divider /></Spaced>
        <Spaced $before={7}><GripBars /></Spaced>
        <Spaced $before={17}>
          <SplitButton $w={40} aria-label="Shadow">
            <span><Icon w={22} h={22}><path d="M8 7h13v14H8z" fill="#909090" stroke="none" /><path d="M2 2h13v14H2z" fill="#6a6a6a" stroke="#b8b8b8" /></Icon></span>
            <Cap><ChevronDown /></Cap>
          </SplitButton>
        </Spaced>
        <Spaced $before={20}><Divider /></Spaced>
        <Spaced $before={7}><GripBars /></Spaced>
        <Spaced $before={17}><PushButton $w={45} aria-label="Fill"><FillWell /></PushButton></Spaced>
      </GeometryBar>
      <Workspace>
        <Icon w={26} h={26} c="#7678b8" s={1.5}><path d="M1 16h23M15 2v23" /></Icon>
        <HorizontalRuler />
        <VerticalRuler />
        <Diagram />
      </Workspace>
      <FooterBar $pad="0 14px 0 19px">
        <GripBars />
        <Status>2 of 331 objects selected</Status>
        <button aria-label="Zoom out"><Magnifier /></button>
        <ZoomPopup>
          <select aria-label="Zoom level" defaultValue="151%"><option>151%</option></select>
          <Cap><ChevronDown /></Cap>
        </ZoomPopup>
        <button aria-label="Zoom in"><Magnifier plus /></button>
        <FooterButton $w={129}>Fit in Window</FooterButton>
      </FooterBar>
    </Column>
  );
}

/* ---------- right column ---------- */

const Head = ({ title, closed }) => (
  <SectionHead>
    <h3><button aria-expanded={!closed}><Triangle right={closed} />{title}</button></h3>
    <button aria-label={`${title} options`}><Hamburger /></button>
  </SectionHead>
);

const Select = ({ w, inset, label, id, value, icon }) => (
  <Popup $w={w} $inset={inset}>
    <select id={id} aria-label={id ? undefined : label} defaultValue={value}>
      <option value={value}>{value}</option>
    </select>
    {icon}
    <Cap><UpDown c="#e8eefc" /></Cap>
  </Popup>
);

const ColorWell = ({ w, color, label }) => (
  <Well $w={w} $color={color} aria-label={label}><i /><Cap><UpDown c="#e8eefc" /></Cap></Well>
);

const grays = ["#000", "#323232", "#666", "#999", "#ccc", "#fff"];
const hues = [
  ["#0000f7", "#4040f5", "#8080f7", "#c0c0f9"],
  ["#ea3423", "#ec534b", "#ef8783", "#f5c2c1"],
  ["#ea35f6", "#eb52f6", "#ef87f7", "#f5c2fa"],
  ["#76fb4c", "#86fb66", "#a2fb8e", "#cdfcc5"],
  ["#75fbfd", "#84fbfd", "#a1fcfe", "#cdfdfe"],
  ["#fffd54", "#fffe6b", "#fffe91", "#fffec6"],
];

const strokeLine = (w) => <Icon w={w} h={4} s={2}><path d={`M0 2h${w}`} /></Icon>;

function RightPane() {
  return (
    <RightColumn>
      <TabStrip $gap={24} $left={14} $lift={2}>
        <Tab aria-label="Object">
          <Icon w={30} h={30} c="#3478f6">
            <path d="M0 0h20v20H0z" fill="#3478f6" stroke="none" /><path d="M25 20V2M21 6l4-4.500L29 6M19 25.500H2M6 21.500 1.500 25.500 6 29.500" />
            <path d="M21 22h3v3h-3zM26 22h3v3h-3zM21 27h3v3h-3zM26 27h3v3h-3z" fill="#3478f6" stroke="none" />
          </Icon>
        </Tab>
        <Tab aria-label="Properties"><Gear w={30} /></Tab>
        <Tab aria-label="Canvas">
          <Icon w={30} h={30} c="#35363a">
            <path d="M0 0h30v30H0z" fill="#c2c2c4" stroke="none" /><path d="M0 7h24M8 0v25" />
            <path d="M22 3.500 28 7l-6 3.500zM4.500 22 8 28l3.500-6z" fill="#35363a" stroke="none" />
          </Icon>
        </Tab>
        <Tab aria-label="Document">
          <Icon w={28} h={30}><path d="M4 0h13v10h9v20H4zM19 0l7 8h-7z" fill="#c2c2c4" stroke="none" /></Icon>
        </Tab>
        <Tab $end aria-label="Stencils"><GridIcon c="#c2c2c4" hole="#35363a" /></Tab>
      </TabStrip>
      <PaneTitle>Object</PaneTitle>
      <Inspector>
        <Section $foot={16}>
          <Head title="Fill" />
          <Body>
            <Select label="Fill type" value="Solid Fill" inset={43}
              icon={<Icon w={20} h={20}><path d="M0 0h20v20H0z" fill="#e6e6e6" stroke="none" /></Icon>} />
            <ColorWell w={125} color="#ffffc0" label="Fill color" />
            <Body $plain $gap={13} $under={6}>
              <Palette>
                {grays.map((g, i) => <Swatch key={g} $big $color={g} $edge={i < 2 ? "#565656" : undefined} aria-label={`Gray ${g}`} />)}
                {hues.map((set) => (
                  <SwatchGroup key={set[0]}>{set.map((c) => <Swatch key={c} $color={c} aria-label={`Color ${c}`} />)}</SwatchGroup>
                ))}
              </Palette>
              <Row><Select label="Blend mode" value="Normal" /></Row>
            </Body>
            <Row><Select w={266} label="Effect" value="No Effect" /></Row>
          </Body>
        </Section>
        <Section $foot={26}>
          <Head title="Stroke" />
          <Body>
            <Select label="Stroke type" value="Single Stroke" inset={43}
              icon={<Icon w={20} h={20} c="#c0c0c0" s={1.5}><path d="M1 1h18v18H1z" /></Icon>} />
            <Body $plain $gap={12}>
              <Row $gap={12}>
                <Row $gap={7}>
                  <Icon w={26} h={26} c="#d0d0d0">
                    <path d="M1 1h24l-2 3 2 4H1l2-4zM1 13h24l-2 2 2 3H1l2-3z" fill="#d0d0d0" stroke="none" /><path d="M1 23.500h24" strokeWidth="1.500" />
                    <circle cx="2" cy="23.500" r="2" fill="#aaa" stroke="none" /><circle cx="24" cy="23.500" r="2" fill="#aaa" stroke="none" />
                  </Icon>
                  <NumberField w={93} label="Stroke width" value="1 pt" />
                </Row>
                <ColorWell w={102} color="#000" label="Stroke color" />
              </Row>
              <Row $spread>
                <Select w={125} label="Dash pattern" value="" icon={strokeLine(80)} />
                <Segments role="group" aria-label="Corners">
                  <Segment aria-label="Mitered"><Icon w={26} h={20}><path d="M3 18V3h22" /></Icon></Segment>
                  <Segment $on aria-label="Rounded"><Icon w={26} h={20}><path d="M3 18C3 8 10 3 25 3" /></Icon></Segment>
                  <Segment aria-label="Beveled"><Icon w={26} h={20}><path d="M3 18v-6l10-9h12" /></Icon></Segment>
                </Segments>
                <Segments role="group" aria-label="Line ends">
                  <Segment aria-label="Butt"><Icon w={30} h={16}><path d="M0 3h30M0 13h30" /></Icon></Segment>
                  <Segment $on aria-label="Round"><Icon w={30} h={16}><rect x="1" y="3" width="28" height="10" rx="5" /></Icon></Segment>
                  <Segment aria-label="Square"><Icon w={30} h={16}><path d="M1 3h28v10H1z" /></Icon></Segment>
                </Segments>
              </Row>
            </Body>
          </Body>
        </Section>
        <Section $foot={14}><Head title="Shadow" closed /></Section>
        <Section $foot={23}>
          <Head title="Shape" />
          <Body>
            <ShapeButton><i /><span>Rectangle</span></ShapeButton>
            <Row $gap={7}><Curve /><NumberField w={93} label="Corner radius" value="2 pt" /></Row>
            <Row $gap={16}>
              <PushButton disabled $w={55} aria-label="Union"><Boolean d="M14 6V1.500H2v11h5A6.500 6.500 0 1 0 14 6Z" /></PushButton>
              <PushButton disabled $w={55} aria-label="Intersect"><Boolean d={Boxed + Ring} /></PushButton>
              <PushButton disabled $w={55} aria-label="Subtract"><Boolean d={"M13 6V1.500H2v11h5" + Ring} /></PushButton>
              <Spring />
              <PushButton disabled $w={55} aria-label="Make points editable"><Boolean d={Boxed + Ring} /></PushButton>
            </Row>
          </Body>
        </Section>
        <Section $foot={18}>
          <Head title="Line" />
          <Body>
            <Select label="Line type" value="Straight" inset={62}
              icon={<Icon w={20} h={20} c="#9c9c9c"><path d="M4 16 16 4" /><circle cx="3" cy="17" r="1.500" /><circle cx="17" cy="3" r="1.500" /></Icon>} />
            <Row $spread>
              <Select w={115} label="Line start" value="" icon={strokeLine(70)} />
              <PushButton $w={125} aria-label="Swap ends"><Swap /></PushButton>
              <Select w={115} label="Line end" value=""
                icon={<Icon w={70} h={12}><path d="M0 6h54" /><path d="M54 1v10l15-5z" fill="#e6e6e6" stroke="none" /></Icon>} />
            </Row>
            <Row $spread>
              <NumberField w={117} label="Start scale" value="100%" />
              <Row $gap={7}><Curve /><NumberField w={93} label="Line corner radius" value="0 pt" /></Row>
              <NumberField w={117} label="End scale" value="50%" />
            </Row>
            <Body $plain $gap={12}>
              <LabeledRow><label htmlFor="hops">Line Hops:</label><Select id="hops" value="Do nothing" /></LabeledRow>
              <LabeledRow><label htmlFor="labels">Line Labels:</label><Select id="labels" value="Do not clip the line's stroke" /></LabeledRow>
            </Body>
          </Body>
        </Section>
        <Section $foot={0} $last>
          <Head title="Image" />
          <Body $gap={13} $fill>
            <Row $gap={16}>
              <PushButton $grow>Set Image...</PushButton>
              <PushButton $w={90} disabled>Remove</PushButton>
              <SplitButton $w={38} aria-label="Image actions"><span><Gear w={23} c="#e6e6e6" /></span><Cap><ChevronDown /></Cap></SplitButton>
            </Row>
            <ImageDrop />
          </Body>
        </Section>
      </Inspector>
      <FooterBar $pad="0 13px" $gap={13}>
        <PushButton $w={38} $h={36} aria-label="Style swatch" />
        <PushButton $w={213} $h={36} aria-label="Style name" />
      </FooterBar>
    </RightColumn>
  );
}

export default function App() {
  return (
    <Desktop>
      <GlobalStyle />
      <Window>
        <AppHeader />
        <Columns>
          <LeftPane />
          <CentrePane />
          <RightPane />
        </Columns>
      </Window>
    </Desktop>
  );
}
